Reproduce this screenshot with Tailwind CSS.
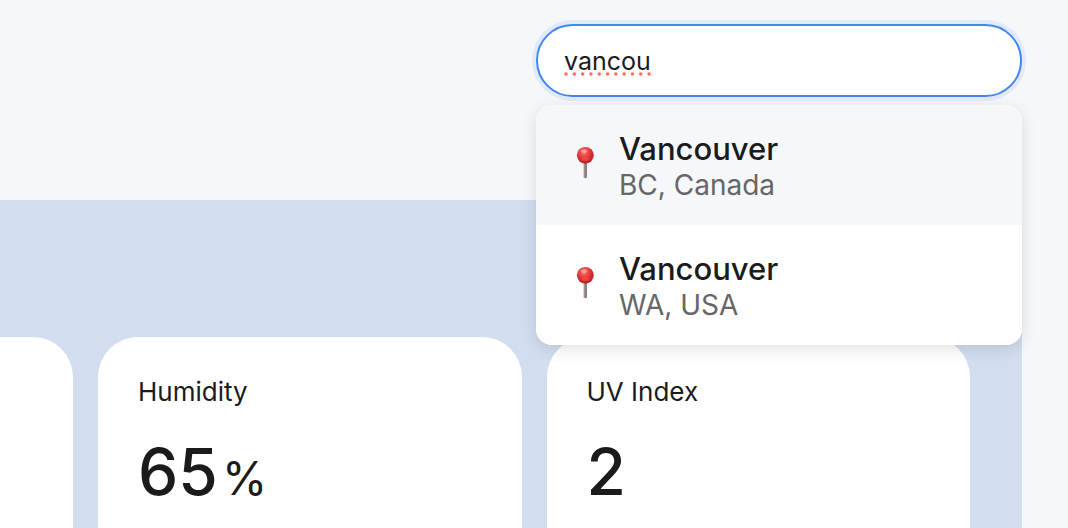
<!DOCTYPE html>
<html lang="en">

<head>
  <meta charset="UTF-8" />
  <meta name="viewport" content="width=device-width, initial-scale=1" />
  <title>Weather</title>
  <script src="https://cdn.jsdelivr.net/npm/@tailwindcss/browser@4"></script>
</head>

<body class="flex flex-col h-screen overflow-hidden bg-[#f5f7fb] font-['Inter',sans-serif] text-[#1b1b1b]">
  <!-- Shared pin artwork -->
  <svg class="absolute w-0 h-0" aria-hidden="true">
    <defs>
      <radialGradient id="pinHead" cx="0.42" cy="0.3" r="0.68">
        <stop offset="0" stop-color="#f89a95" />
        <stop offset="0.28" stop-color="#ee5350" />
        <stop offset="0.72" stop-color="#d9282b" />
        <stop offset="1" stop-color="#b52225" />
      </radialGradient>
      <linearGradient id="pinNeedle" x1="0" x2="1" y1="0" y2="0">
        <stop offset="0" stop-color="#b9aaa5" />
        <stop offset="0.5" stop-color="#94847f" />
        <stop offset="1" stop-color="#776a67" />
      </linearGradient>
      <symbol id="pin" viewBox="0 0 20 34">
        <path d="M8.500 17h3.400v14a1.700 1.300 0 0 1-3.400 0z" fill="url(#pinNeedle)" />
        <circle cx="10.300" cy="9.300" r="8.400" fill="url(#pinHead)" />
        <ellipse cx="10.500" cy="13" rx="4" ry="2" fill="#f0625c" opacity="0.45" />
        <ellipse cx="9" cy="5" rx="3.200" ry="1.700" fill="#ffd0cb" opacity="0.45" />
      </symbol>
    </defs>
  </svg>

  <header class="flex items-start justify-end h-[200px] shrink-0 pt-6 pr-[46px]">
    <form class="relative w-[486px]">
      <label for="search" class="sr-only">Search city</label>
      <input id="search" type="text" value="vancou" autocomplete="off" spellcheck="false"
        class="block w-full h-[73px] rounded-full border-2 border-[#4285f4] bg-white px-[26px] text-[25px] ring-4 ring-[#e1eaf9] outline-none" />
      <!-- Spelling mark -->
      <svg class="absolute left-7 top-12 w-[88px] h-1" viewBox="0 0 88 4" aria-hidden="true">
        <path d="M2 2H87" stroke="#ff6b63" stroke-width="3.400" stroke-linecap="round" stroke-dasharray="0.100 8.200" />
      </svg>

      <!-- Suggestions -->
      <ul class="absolute top-full inset-x-0 z-10 mt-2 overflow-hidden rounded-2xl bg-white shadow-[0_4px_16px_rgba(0,0,0,0.12)]">
        <li>
          <button type="button" class="flex w-full h-[120px] items-center gap-6 bg-[#f5f7fb] pl-[39px] text-left">
            <svg class="w-5 h-[34px] -mt-1"><use href="#pin" /></svg>
            <span class="pt-1">
              <span class="block text-[31px] leading-9 font-medium">Vancouver</span>
              <span class="block text-[28px] leading-9 text-[#666666]">BC, Canada</span>
            </span>
          </button>
        </li>
        <li>
          <button type="button" class="flex w-full h-[120px] items-center gap-6 bg-white pl-[39px] text-left">
            <svg class="w-5 h-[34px] -mt-1"><use href="#pin" /></svg>
            <span class="pt-1">
              <span class="block text-[31px] leading-9 font-medium">Vancouver</span>
              <span class="block text-[28px] leading-9 text-[#666666]">WA, USA</span>
            </span>
          </button>
        </li>
      </ul>
    </form>
  </header>

  <!-- Highlights -->
  <main class="mr-[46px] grid flex-1 grid-cols-[73px_1fr_1fr] gap-[25px] bg-[#d2ddef] pt-[137px] pr-[52px]">
    <section class="rounded-tr-[40px] bg-white"></section>
    <section class="rounded-t-[40px] bg-white px-10 pt-[35px]">
      <h2 class="text-[26px] leading-10">Humidity</h2>
      <p class="mt-5 flex items-baseline gap-1 text-[64px] leading-[80px] font-medium">65<span class="text-[46px] font-normal">%</span></p>
    </section>
    <section class="rounded-t-[40px] bg-white px-10 pt-[35px]">
      <h2 class="text-[26px] leading-10">UV Index</h2>
      <p class="mt-5 text-[64px] leading-[80px] font-medium">2</p>
    </section>
  </main>
</body>

</html>
